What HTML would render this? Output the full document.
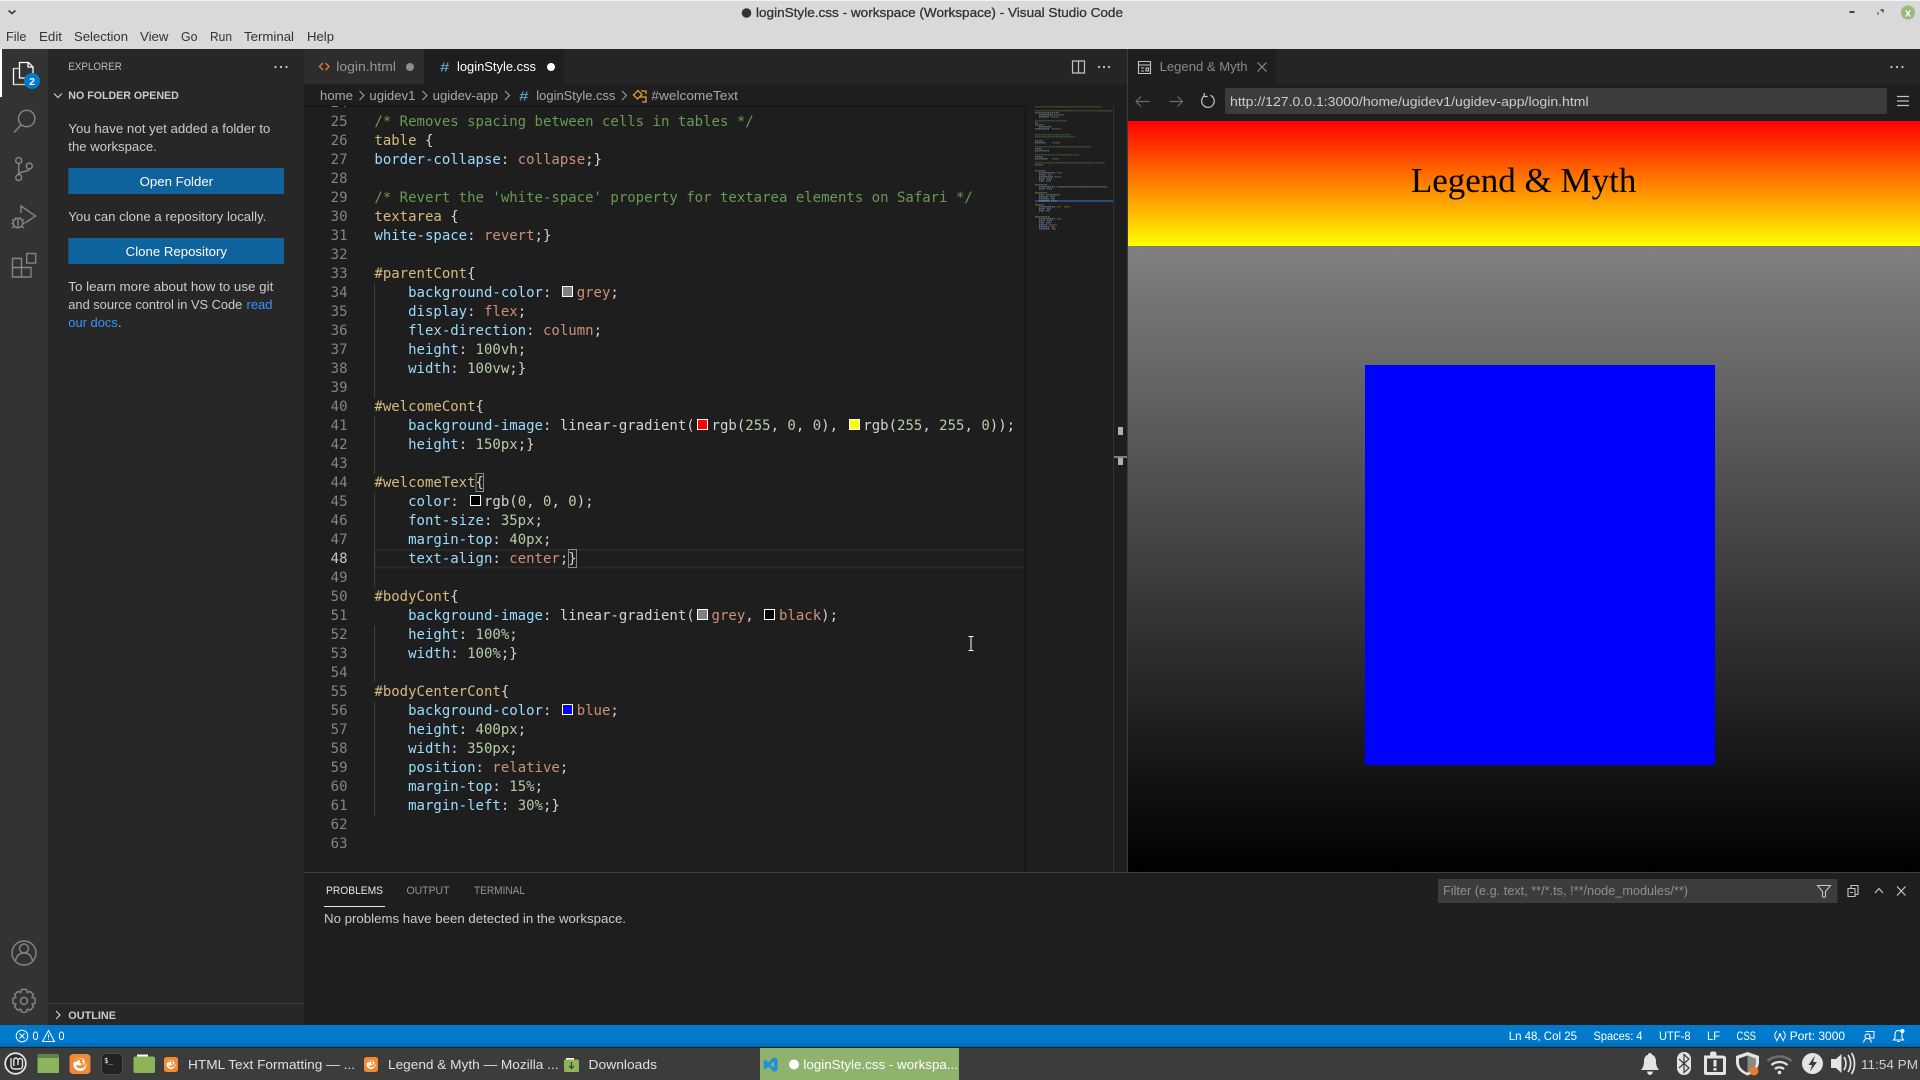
<!DOCTYPE html>
<html lang="en">
<head>
<meta charset="utf-8">
<title>loginStyle.css - workspace (Workspace) - Visual Studio Code</title>
<style>
html,body{margin:0;padding:0;background:#1e1e1e;width:1920px;height:1080px;overflow:hidden}
svg{display:block}
text{font-family:"Liberation Sans",sans-serif;font-size:13px;white-space:pre}
.m text,text.m{font-family:"DejaVu Sans Mono",monospace;font-size:14px}
.ln text{text-anchor:end;fill:#858585}
.c{fill:#6a9955}.s{fill:#d7ba7d}.p{fill:#9cdcfe}.v{fill:#ce9178}.n{fill:#b5cea8}.d{fill:#d4d4d4}
.ui{fill:#cccccc}
.ic{fill:none;stroke:#858585;stroke-width:1.4}
.w{fill:none;stroke:#c5c5c5;stroke-width:1.2}
.tr{fill:#e4e4e4}
</style>
</head>
<body>
<svg xmlns="http://www.w3.org/2000/svg" width="1920" height="1080" viewBox="0 0 1920 1080">
<defs>
<linearGradient id="hd" x1="0" y1="0" x2="0" y2="1"><stop offset="0" stop-color="#f00"/><stop offset="1" stop-color="#ff0"/></linearGradient>
<linearGradient id="bd" x1="0" y1="0" x2="0" y2="1"><stop offset="0" stop-color="#808080"/><stop offset="1" stop-color="#000"/></linearGradient>
<linearGradient id="st" x1="0" y1="0" x2="0" y2="1"><stop offset="0" stop-color="#007acc"/><stop offset=".75" stop-color="#007acc"/><stop offset="1" stop-color="#0067ab"/></linearGradient>
<clipPath id="cl"><rect x="304" y="106" width="722" height="766"/></clipPath>
</defs>

<!-- base -->
<rect width="1920" height="1080" fill="#1e1e1e"/>
<rect width="1920" height="49" fill="#d9d9d9"/>
<rect width="1920" height="1" fill="#f2f2f2"/>
<path d="M8.5 10.5l3.5 3 3.5-3" fill="none" stroke="#333" stroke-width="1.5"/>
<circle cx="746.5" cy="13" r="4.8" fill="#333"/>
<text x="756" y="17" textLength="367" lengthAdjust="spacingAndGlyphs" fill="#333" stroke="#333" stroke-width=".3">loginStyle.css - workspace (Workspace) - Visual Studio Code</text>
<path d="M1849.5 12h5" stroke="#444" stroke-width="2"/>
<path d="M1878 14.5v-2M1880.5 10h2.5v2.5" fill="none" stroke="#444" stroke-width="1.4"/>
<circle cx="1908" cy="12.5" r="7" fill="#9ab87c"/>
<text x="1905" y="16.5" font-size="11" fill="#fff" style="font-size:11px;font-weight:bold">x</text>

<g fill="#333">
<text x="6" y="41" textLength="20.5" lengthAdjust="spacingAndGlyphs">File</text>
<text x="39" y="41" textLength="23" lengthAdjust="spacingAndGlyphs">Edit</text>
<text x="74" y="41" textLength="54" lengthAdjust="spacingAndGlyphs">Selection</text>
<text x="140" y="41" textLength="28.5" lengthAdjust="spacingAndGlyphs">View</text>
<text x="181" y="41" textLength="16.5" lengthAdjust="spacingAndGlyphs">Go</text>
<text x="210" y="41" textLength="22" lengthAdjust="spacingAndGlyphs">Run</text>
<text x="244" y="41" textLength="50" lengthAdjust="spacingAndGlyphs">Terminal</text>
<text x="307" y="41" textLength="27" lengthAdjust="spacingAndGlyphs">Help</text>
</g>

<!-- activity bar -->
<rect x="0" y="49" width="48" height="976" fill="#333"/>
<rect x="0" y="49" width="2" height="48" fill="#fff"/>
<path d="M19.5 75V62.5h9l4.5 4.5V78H19.5zM28 62.5V67h5M19.5 68.5h-6V84.5H26V78" fill="none" stroke="#fff" stroke-width="1.3"/>
<path d="M13.5 68.5h6M13.5 84.5H26" stroke="#e8c88a" stroke-width="1" fill="none"/>
<circle cx="32" cy="81" r="8" fill="#007acc"/>
<text x="32" y="85" text-anchor="middle" fill="#fff" style="font-size:10.5px;font-weight:bold">2</text>
<g class="ic">
<circle cx="26.7" cy="118.500" r="8.2"/><path d="M21 125L14 132.500"/>
<circle cx="18.7" cy="160.500" r="3"/><circle cx="29.3" cy="166" r="3"/><circle cx="18.7" cy="177.500" r="3"/>
<path d="M18.7 163.500v11M29.3 169c0 3-10.600 2-10.600 6"/>
<path d="M21 213v-7l14.500 10-10.500 7"/>
<circle cx="18" cy="223" r="4.800"/><path d="M12 219.500l2.500 1.500M24 219.500l-2.500 1.500M11.500 223.500h2M24.500 223.500h-2M12 228l2.500-2M24 228l-2.500-2M15 217.500l1.500 1.500M21 217.500l-1.500 1.500M18 218.500v9"/>
<path d="M12.500 258.500h9v18.500h-9zM12.500 267.500h18.500v9.500h-9.500M21.500 258.500v18.500"/>
<rect x="26.700" y="253.500" width="9" height="9.500"/>
<circle cx="24" cy="953" r="12"/><circle cx="24" cy="948.500" r="4.500"/><path d="M15.500 961c1-6 4-8 8.500-8s7.500 2 8.500 8"/>
<circle cx="24" cy="1001" r="3.500"/>
<path d="M21.500 989.500h5l.8 3 2.800-1.200 3.300 3.400-1.300 2.800 3 .8v5l-3 .8 1.300 2.800-3.300 3.400-2.800-1.200-.8 3h-5l-.8-3-2.800 1.200-3.300-3.400 1.300-2.800-3-.8v-5l3-.8-1.300-2.800 3.300-3.400 2.800 1.200z"/>
</g>

<!-- sidebar -->
<rect x="48" y="49" width="256" height="976" fill="#272727"/>
<text x="68.300" y="70" fill="#bbb" textLength="53.500" lengthAdjust="spacingAndGlyphs" style="font-size:11px">EXPLORER</text>
<g fill="#ccc"><circle cx="275.500" cy="67" r="1.100"/><circle cx="281" cy="67" r="1.100"/><circle cx="286.500" cy="67" r="1.100"/></g>
<path d="M54 93.500l4 4 4-4" fill="none" stroke="#ccc" stroke-width="1.200"/>
<text x="68.300" y="99" fill="#ccc" textLength="110.500" lengthAdjust="spacingAndGlyphs" style="font-size:11px;font-weight:bold">NO FOLDER OPENED</text>
<g class="ui">
<text x="68.300" y="133" textLength="202" lengthAdjust="spacingAndGlyphs">You have not yet added a folder to</text>
<text x="68.300" y="151" textLength="88.500" lengthAdjust="spacingAndGlyphs">the workspace.</text>
<text x="68.300" y="221" textLength="198" lengthAdjust="spacingAndGlyphs">You can clone a repository locally.</text>
<text x="68.300" y="291" textLength="205" lengthAdjust="spacingAndGlyphs">To learn more about how to use git</text>
<text x="68.300" y="309" textLength="174" lengthAdjust="spacingAndGlyphs">and source control in VS Code</text>
<text x="118" y="327">.</text>
</g>
<text x="246.500" y="309" fill="#3794ff" textLength="26" lengthAdjust="spacingAndGlyphs">read</text>
<text x="68.300" y="327" fill="#3794ff" textLength="49.500" lengthAdjust="spacingAndGlyphs">our docs</text>
<rect x="68.300" y="168" width="215.700" height="26" fill="#0e639c"/>
<rect x="68.300" y="238" width="215.700" height="26" fill="#0e639c"/>
<text x="139.600" y="186" fill="#fff" textLength="73.500" lengthAdjust="spacingAndGlyphs">Open Folder</text>
<text x="125.700" y="256" fill="#fff" textLength="101.300" lengthAdjust="spacingAndGlyphs">Clone Repository</text>
<rect x="48" y="1003" width="256" height="1" fill="#3c3c3c"/>
<path d="M56 1011l4 4-4 4" fill="none" stroke="#ccc" stroke-width="1.200"/>
<text x="68.300" y="1019" fill="#ccc" textLength="47.700" lengthAdjust="spacingAndGlyphs" style="font-size:11px;font-weight:bold">OUTLINE</text>

<!-- tabs -->
<rect x="304" y="49" width="824" height="35" fill="#252526"/>
<rect x="304" y="49" width="120" height="35" fill="#2d2d2d"/>
<rect x="424" y="49" width="140" height="35" fill="#1e1e1e"/>
<path d="M323 63l-3.500 3.500 3.500 3.500M325.500 63l3.500 3.500-3.500 3.500" fill="none" stroke="#e37933" stroke-width="1.400"/>
<text x="336.300" y="71" fill="#969696" textLength="59.700" lengthAdjust="spacingAndGlyphs">login.html</text>
<circle cx="410" cy="67" r="4" fill="#8e8e8e"/>
<text x="440" y="71.500" fill="#519aba" style="font-size:13px;font-weight:bold" textLength="9.500" lengthAdjust="spacingAndGlyphs">#</text>
<text x="457" y="71" fill="#fff" textLength="79" lengthAdjust="spacingAndGlyphs">loginStyle.css</text>
<circle cx="551" cy="67" r="4" fill="#fff"/>
<path d="M1072.500 61h12v12h-12zM1078.500 61v12" fill="none" stroke="#c5c5c5" stroke-width="1.200"/>
<g fill="#c5c5c5"><circle cx="1099" cy="67" r="1.100"/><circle cx="1104" cy="67" r="1.100"/><circle cx="1109" cy="67" r="1.100"/></g>

<!-- breadcrumbs -->
<rect x="304" y="84" width="823" height="22" fill="#1e1e1e"/>
<g fill="#a8a8a8">
<text x="320" y="100" textLength="33" lengthAdjust="spacingAndGlyphs">home</text>
<text x="369.400" y="100" textLength="46" lengthAdjust="spacingAndGlyphs">ugidev1</text>
<text x="432.600" y="100" textLength="65.400" lengthAdjust="spacingAndGlyphs">ugidev-app</text>
<text x="536.300" y="100" textLength="79.200" lengthAdjust="spacingAndGlyphs">loginStyle.css</text>
<text x="651.400" y="100" textLength="86.600" lengthAdjust="spacingAndGlyphs">#welcomeText</text>
</g>
<text x="519" y="100.500" fill="#519aba" style="font-size:13px;font-weight:bold" textLength="9.500" lengthAdjust="spacingAndGlyphs">#</text>
<path d="M359.500 91l4.500 4.500-4.500 4.500M422.500 91l4.500 4.500-4.500 4.500M505 91l4.500 4.500-4.500 4.500M622 91l4.500 4.500-4.500 4.500" fill="none" stroke="#a8a8a8" stroke-width="1"/>
<path d="M633.500 95l4.500-4.500 4 4-4.500 4.500zM640 97h6v5h-4M641 91h5v3" fill="none" stroke="#ee9d28" stroke-width="1.300"/>
<rect x="304" y="105" width="720" height="2" fill="#171717"/>

<!-- editor -->
<g clip-path="url(#cl)">
<rect x="375" y="550" width="651" height="17.500" fill="none" stroke="#282828" stroke-width="2"/>
<path d="M374.500 283.500v114M374.500 416.500v57M374.500 492.500v95M374.500 625.500v57M374.500 701.500v114" stroke="#404040" stroke-width="1" fill="none"/>
<g class="m ln">
<text x="347.500" y="107">24</text><text x="347.500" y="126">25</text><text x="347.500" y="145">26</text><text x="347.500" y="164">27</text><text x="347.500" y="183">28</text><text x="347.500" y="202">29</text><text x="347.500" y="221">30</text><text x="347.500" y="240">31</text><text x="347.500" y="259">32</text><text x="347.500" y="278">33</text><text x="347.500" y="297">34</text><text x="347.500" y="316">35</text><text x="347.500" y="335">36</text><text x="347.500" y="354">37</text><text x="347.500" y="373">38</text><text x="347.500" y="392">39</text><text x="347.500" y="411">40</text><text x="347.500" y="430">41</text><text x="347.500" y="449">42</text><text x="347.500" y="468">43</text><text x="347.500" y="487">44</text><text x="347.500" y="506">45</text><text x="347.500" y="525">46</text><text x="347.500" y="544">47</text><text x="347.500" y="563" style="fill:#c6c6c6">48</text><text x="347.500" y="582">49</text><text x="347.500" y="601">50</text><text x="347.500" y="620">51</text><text x="347.500" y="639">52</text><text x="347.500" y="658">53</text><text x="347.500" y="677">54</text><text x="347.500" y="696">55</text><text x="347.500" y="715">56</text><text x="347.500" y="734">57</text><text x="347.500" y="753">58</text><text x="347.500" y="772">59</text><text x="347.500" y="791">60</text><text x="347.500" y="810">61</text><text x="347.500" y="829">62</text><text x="347.500" y="848">63</text>
</g>
<g class="m d">
<text x="374.400" y="126" class="c">/* Removes spacing between cells in tables */</text>
<text x="374.400" y="145"><tspan class="s">table</tspan> {</text>
<text x="374.400" y="164"><tspan class="p">border-collapse</tspan>: <tspan class="v">collapse</tspan>;}</text>
<text x="374.400" y="202" class="c">/* Revert the 'white-space' property for textarea elements on Safari */</text>
<text x="374.400" y="221"><tspan class="s">textarea</tspan> {</text>
<text x="374.400" y="240"><tspan class="p">white-space</tspan>: <tspan class="v">revert</tspan>;}</text>
<text x="374.400" y="278"><tspan class="s">#parentCont</tspan>{</text>
<text x="374.400" y="297">    <tspan class="p">background-color</tspan>:   <tspan class="v">grey</tspan>;</text>
<text x="374.400" y="316">    <tspan class="p">display</tspan>: <tspan class="v">flex</tspan>;</text>
<text x="374.400" y="335">    <tspan class="p">flex-direction</tspan>: <tspan class="v">column</tspan>;</text>
<text x="374.400" y="354">    <tspan class="p">height</tspan>: <tspan class="n">100vh</tspan>;</text>
<text x="374.400" y="373">    <tspan class="p">width</tspan>: <tspan class="n">100vw</tspan>;}</text>
<text x="374.400" y="411"><tspan class="s">#welcomeCont</tspan>{</text>
<text x="374.400" y="430">    <tspan class="p">background-image</tspan>: linear-gradient(  rgb(<tspan class="n">255</tspan>, <tspan class="n">0</tspan>, <tspan class="n">0</tspan>),   rgb(<tspan class="n">255</tspan>, <tspan class="n">255</tspan>, <tspan class="n">0</tspan>));</text>
<text x="374.400" y="449">    <tspan class="p">height</tspan>: <tspan class="n">150px</tspan>;}</text>
<text x="374.400" y="487"><tspan class="s">#welcomeText</tspan>{</text>
<text x="374.400" y="506">    <tspan class="p">color</tspan>:   rgb(<tspan class="n">0</tspan>, <tspan class="n">0</tspan>, <tspan class="n">0</tspan>);</text>
<text x="374.400" y="525">    <tspan class="p">font-size</tspan>: <tspan class="n">35px</tspan>;</text>
<text x="374.400" y="544">    <tspan class="p">margin-top</tspan>: <tspan class="n">40px</tspan>;</text>
<text x="374.400" y="563">    <tspan class="p">text-align</tspan>: <tspan class="v">center</tspan>;}</text>
<text x="374.400" y="601"><tspan class="s">#bodyCont</tspan>{</text>
<text x="374.400" y="620">    <tspan class="p">background-image</tspan>: linear-gradient(  <tspan class="v">grey</tspan>,   <tspan class="v">black</tspan>);</text>
<text x="374.400" y="639">    <tspan class="p">height</tspan>: <tspan class="n">100%</tspan>;</text>
<text x="374.400" y="658">    <tspan class="p">width</tspan>: <tspan class="n">100%</tspan>;}</text>
<text x="374.400" y="696"><tspan class="s">#bodyCenterCont</tspan>{</text>
<text x="374.400" y="715">    <tspan class="p">background-color</tspan>:   <tspan class="v">blue</tspan>;</text>
<text x="374.400" y="734">    <tspan class="p">height</tspan>: <tspan class="n">400px</tspan>;</text>
<text x="374.400" y="753">    <tspan class="p">width</tspan>: <tspan class="n">350px</tspan>;</text>
<text x="374.400" y="772">    <tspan class="p">position</tspan>: <tspan class="v">relative</tspan>;</text>
<text x="374.400" y="791">    <tspan class="p">margin-top</tspan>: <tspan class="n">15%</tspan>;</text>
<text x="374.400" y="810">    <tspan class="p">margin-left</tspan>: <tspan class="n">30%</tspan>;}</text>
</g>
<!-- swatches -->
<g stroke="#fff" stroke-width="1">
<rect x="562.500" y="286.500" width="10" height="10" fill="#808080"/>
<rect x="697.500" y="419.500" width="10" height="10" fill="#f00"/>
<rect x="849.500" y="419.500" width="10" height="10" fill="#ff0"/>
<rect x="470.500" y="495.500" width="10" height="10" fill="#000"/>
<rect x="697.500" y="609.500" width="10" height="10" fill="#808080"/>
<rect x="764.500" y="609.500" width="10" height="10" fill="#000"/>
<rect x="562.500" y="704.500" width="10" height="10" fill="#00f"/>
</g>
<!-- bracket match -->
<rect x="476" y="473.500" width="7.500" height="18" fill="none" stroke="#888" stroke-width="1"/>
<rect x="568.500" y="549.500" width="8" height="18" fill="none" stroke="#888" stroke-width="1"/>
</g>
<!-- I-beam -->
<path d="M968.500 636.500h2l.500.500.500-.500h2M971 637v13M968.500 650.500h2l.500-.500.500.500h2" fill="none" stroke="#fff" stroke-width="1"/>

<!-- minimap -->
<rect x="1024" y="106" width="3" height="766" fill="#181818"/>
<rect x="1035" y="200" width="78" height="2" fill="#264f78"/>
<g fill="none" stroke-width="1.100" opacity=".55" stroke-dasharray="1.500 .6">
<path stroke="#6a9955" d="M1035 106.800h67M1035 110.800h77M1035 120.800h32M1035 134.800h36M1035 136.800h40M1035 146.800h56M1035 154.800h44M1035 162.800h70"/>
<path stroke="#d7ba7d" d="M1035 112.800h24M1035 122.800h3M1035 124.800h9M1035 140.800h8M1035 148.800h7M1035 156.800h8M1035 164.800h8M1035 170.800h11M1035 184.800h12M1035 192.800h12M1035 204.800h9M1035 216.800h15"/>
<path stroke="#9cdcfe" d="M1039 114.800h14M1039 116.800h10M1039 126.800h12M1035 128.800h14M1035 142.800h11M1035 150.800h14M1035 158.800h13M1039 172.800h16M1039 174.800h7M1039 176.800h14M1039 178.800h6M1039 180.800h5M1039 186.800h16M1039 188.800h6M1039 194.800h5M1039 196.800h9M1039 198.800h10M1039 200.800h10M1039 206.800h16M1039 208.800h6M1039 210.800h5M1039 218.800h16M1039 220.800h6M1039 222.800h5M1039 224.800h8M1039 226.800h10M1039 228.800h11"/>
<path stroke="#ce9178" d="M1054 114.800h10M1051 116.800h8M1052 128.800h9M1052 142.800h8M1052 158.800h7M1057 172.800h5M1048 174.800h4M1055 176.800h6M1051 200.800h6M1057 206.800h4M1064 206.800h6M1057 218.800h4M1049 224.800h8"/>
<path stroke="#b5cea8" d="M1047 178.800h5M1046 180.800h5M1057 186.800h50M1047 188.800h5M1046 194.800h14M1050 196.800h5M1051 198.800h4M1047 208.800h4M1046 210.800h4M1047 220.800h5M1046 222.800h5M1051 226.800h4M1052 228.800h4"/>
</g>
<!-- scrollbar lane -->
<rect x="1113" y="106" width="14" height="766" fill="#1e1e1e"/>
<rect x="1113" y="106" width="1" height="766" fill="#333"/>
<rect x="1114" y="456" width="13" height="2" fill="#7f7f7f"/>
<rect x="1118" y="427" width="5" height="8" fill="#b0b0b0"/>
<rect x="1118" y="458" width="5" height="7" fill="#b0b0b0"/>
<rect x="1127" y="49" width="1" height="823" fill="#3c3c3c"/>

<!-- right pane -->
<rect x="1128" y="49" width="792" height="35" fill="#252526"/>
<rect x="1128" y="49" width="148" height="35" fill="#1e1e1e"/>
<path d="M1138.500 61.500h12v12h-12zM1138.500 65h12M1141 68h3M1141 71h3M1146 68h2.500v3h-2.500z" fill="none" stroke="#c5c5c5" stroke-width="1.100"/>
<text x="1159.600" y="71" fill="#8a8a8a" textLength="88" lengthAdjust="spacingAndGlyphs">Legend &amp; Myth</text>
<path d="M1257.500 62.500l9 9M1266.500 62.500l-9 9" stroke="#8a8a8a" stroke-width="1.200"/>
<g fill="#c5c5c5"><circle cx="1891.500" cy="67" r="1.100"/><circle cx="1897" cy="67" r="1.100"/><circle cx="1902.500" cy="67" r="1.100"/></g>
<rect x="1128" y="84" width="792" height="37" fill="#1e1e1e"/>
<path d="M1149.500 101.500h-13M1141 96.500l-5 5 5 5" fill="none" stroke="#6c6c6c" stroke-width="1.200"/>
<path d="M1169.500 101.500h13M1177.500 96.500l5 5-5 5" fill="none" stroke="#6c6c6c" stroke-width="1.200"/>
<path d="M1204.500 95.800a6.300 6.300 0 1 0 6-.5M1204.200 93v3.500h3.500" fill="none" stroke="#c5c5c5" stroke-width="1.200"/>
<rect x="1225" y="88" width="662" height="26" fill="#3c3c3c"/>
<text x="1230" y="106" fill="#ccc" textLength="358.600" lengthAdjust="spacingAndGlyphs">http://127.0.0.1:3000/home/ugidev1/ugidev-app/login.html</text>
<path d="M1897 96.500h12M1897 101h12M1897 105.500h12" stroke="#c5c5c5" stroke-width="1.200"/>

<rect x="1128" y="121" width="792" height="125" fill="url(#hd)"/>
<rect x="1128" y="246" width="792" height="626" fill="url(#bd)"/>
<text x="1523.600" y="192" text-anchor="middle" fill="#000" style="font-family:'Liberation Serif',serif;font-size:35px">Legend &amp; Myth</text>
<rect x="1365" y="365" width="350" height="400" fill="#00f"/>

<!-- panel -->
<rect x="304" y="872" width="1616" height="1" fill="#414141"/>
<rect x="304" y="873" width="1616" height="152" fill="#1e1e1e"/>
<text x="326" y="894" fill="#e7e7e7" textLength="57" lengthAdjust="spacingAndGlyphs" style="font-size:11px">PROBLEMS</text>
<text x="406.500" y="894" fill="#969696" textLength="43" lengthAdjust="spacingAndGlyphs" style="font-size:11px">OUTPUT</text>
<text x="474" y="894" fill="#969696" textLength="51" lengthAdjust="spacingAndGlyphs" style="font-size:11px">TERMINAL</text>
<rect x="324" y="906" width="61" height="1" fill="#e7e7e7"/>
<text x="324" y="923" fill="#ccc" textLength="302" lengthAdjust="spacingAndGlyphs">No problems have been detected in the workspace.</text>
<rect x="1438" y="879" width="399.500" height="24" fill="#3c3c3c"/>
<text x="1443" y="895" fill="#8f8f8f" textLength="245" lengthAdjust="spacingAndGlyphs">Filter (e.g. text, **/*.ts, !**/node_modules/**)</text>
<path d="M1817.500 885.500h13l-5 6v5.500h-3v-5.500z" fill="none" stroke="#c5c5c5" stroke-width="1.100"/>
<path d="M1851 888v-2.500h7v9h-2.500M1848 888.500h7v8h-7zM1850 892.500h3" fill="none" stroke="#c5c5c5" stroke-width="1.100"/>
<path d="M1875 893l4-4.500 4 4.500M1897 886.500l8.500 9M1905.500 886.500l-8.500 9" fill="none" stroke="#c5c5c5" stroke-width="1.200"/>

<!-- status bar -->
<rect x="0" y="1025" width="1920" height="22" fill="url(#st)"/>
<g fill="#fff">
<circle cx="22" cy="1036" r="5.800" fill="none" stroke="#fff"/>
<path d="M19.500 1033.500l5 5M24.500 1033.500l-5 5" stroke="#fff" fill="none"/>
<text x="32.500" y="1040" textLength="6" lengthAdjust="spacingAndGlyphs" style="font-size:12px">0</text>
<path d="M48.500 1030.500l6 11h-12zM48.500 1034.500v3.500M48.500 1039v1" fill="none" stroke="#fff"/>
<text x="58.500" y="1040" textLength="6" lengthAdjust="spacingAndGlyphs" style="font-size:12px">0</text>
<text x="1508.700" y="1040" textLength="68.300" lengthAdjust="spacingAndGlyphs" style="font-size:12px">Ln 48, Col 25</text>
<text x="1593.500" y="1040" textLength="49" lengthAdjust="spacingAndGlyphs" style="font-size:12px">Spaces: 4</text>
<text x="1659" y="1040" textLength="31.500" lengthAdjust="spacingAndGlyphs" style="font-size:12px">UTF-8</text>
<text x="1707" y="1040" textLength="13" lengthAdjust="spacingAndGlyphs" style="font-size:12px">LF</text>
<text x="1736.500" y="1040" textLength="19.500" lengthAdjust="spacingAndGlyphs" style="font-size:12px">CSS</text>
<text x="1789.800" y="1040" textLength="55.200" lengthAdjust="spacingAndGlyphs" style="font-size:12px">Port: 3000</text>
<path d="M1780 1034.500l-3.500 7M1780 1034.500l3.500 7M1777 1031c-3 3-3 6 0 9M1783 1031c3 3 3 6 0 9" fill="none" stroke="#fff" stroke-width=".9"/>
<circle cx="1780" cy="1034.500" r="1.300"/>
<path d="M1865.500 1031.500h8.500v6.500h-4M1867.500 1034c1.700 0 2.500 1 2.500 2.300s-1 2.300-2.500 2.300-2.500-1-2.500-2.300 1-2.300 2.500-2.300zM1863.500 1042.500c.5-2.500 2-4 4-4s3.500 1.500 4 4" fill="none" stroke="#fff" stroke-width="1"/>
<path d="M1898.500 1030.500c2.700 0 3.500 2 3.500 4v3.500l1.500 2h-10l1.500-2v-3.500c0-2 1-4 3.500-4zM1897 1041.500h3" fill="none" stroke="#fff" stroke-width="1.100"/>
<circle cx="1902.500" cy="1031" r="2"/>
</g>

<!-- taskbar -->
<rect x="0" y="1047" width="1920" height="33" fill="#3c3c3c"/>
<rect x="0" y="1047" width="1920" height="1" fill="#16232d"/>
<rect x="760" y="1048" width="199" height="32" fill="#8fb26c"/>

<!-- mint logo -->
<circle cx="15.500" cy="1063.500" r="10.300" fill="#2c2c2c" stroke="#e2e2e2" stroke-width="1.800"/>
<path d="M11 1058v7.500c0 2 1 3.500 3.500 3.500h5c2 0 3-1.500 3-3v-5c0-1.500-1-2.500-2.300-2.500s-2.200 1-2.200 2.500v4M18 1060.500c0-1.500-1-2.500-2.200-2.500s-2 1-2 2.500v5.500" fill="none" stroke="#e2e2e2" stroke-width="1.400"/>
<!-- files -->
<rect x="37.500" y="1054" width="21.500" height="19" rx="1" fill="#8db35b"/>
<rect x="37.500" y="1054" width="21.500" height="4" fill="#66804a"/>
<!-- firefox -->
<rect x="69.500" y="1054" width="21" height="20" rx="4" fill="#f08a35"/>
<circle cx="80" cy="1064.500" r="6.500" fill="#fff"/>
<path d="M75 1062c2-3 5-3.500 7-2-1 .5-1.500 1-1.500 2 2 .5 2.500 2 1.500 3.500-1.500 1.500-4 1-5.500 0 2 2.500 5.500 2.500 7.500.5 2-2.500 2-5 1-7.500" fill="none" stroke="#f08a35" stroke-width="1.700"/>
<!-- terminal -->
<rect x="101.500" y="1053.500" width="21" height="21" rx="4" fill="#222" stroke="#555" stroke-width=".8"/>
<text x="104" y="1063" fill="#eee" style="font-family:'DejaVu Sans Mono',monospace;font-size:7.500px">$_</text>
<!-- folder -->
<path d="M137 1054.500h11v3h-11z" fill="#fff"/>
<rect x="133.500" y="1056.500" width="21.500" height="16.500" rx="2" fill="#8db35b"/>
<!-- small firefox 1 -->
<rect x="164" y="1057" width="14" height="15" rx="2.500" fill="#f08a35"/>
<circle cx="171" cy="1064.500" r="4.500" fill="#fff"/>
<path d="M167.500 1063c1-2 3.500-2.500 5-1.500-1 .5-1 1-1 1.500 1.500.5 1.500 1.500 1 2.500-1 1-2.800.8-3.800 0 1.300 1.500 3.800 1.500 5 .3 1.300-1.500 1.300-3.300.8-5" fill="none" stroke="#f08a35" stroke-width="1.100"/>
<text x="188" y="1069" fill="#e0e0e0" textLength="167" lengthAdjust="spacingAndGlyphs">HTML Text Formatting — ...</text>
<rect x="364" y="1057" width="14" height="15" rx="2.500" fill="#f08a35"/>
<circle cx="371" cy="1064.500" r="4.500" fill="#fff"/>
<path d="M367.500 1063c1-2 3.500-2.500 5-1.500-1 .5-1 1-1 1.500 1.500.5 1.500 1.500 1 2.500-1 1-2.800.8-3.800 0 1.300 1.500 3.800 1.500 5 .3 1.300-1.500 1.300-3.300.8-5" fill="none" stroke="#f08a35" stroke-width="1.100"/>
<text x="388" y="1069" fill="#e0e0e0" textLength="170.500" lengthAdjust="spacingAndGlyphs">Legend &amp; Myth — Mozilla ...</text>
<path d="M566 1058h8v2h-8z" fill="#fff"/>
<rect x="564" y="1059.500" width="15" height="12.500" rx="1.500" fill="#8db35b"/>
<path d="M571.500 1062v6M569 1066l2.500 2.500 2.500-2.500" fill="none" stroke="#3c3c3c" stroke-width="1.200"/>
<text x="588.500" y="1069" fill="#e0e0e0" textLength="68.500" lengthAdjust="spacingAndGlyphs">Downloads</text>
<!-- vscode icon -->
<path d="M774 1057l3.500 1.800v11.400l-3.500 1.800-5.500-5.300-3.200 2.500-1.500-.8v-7.800l1.500-.8 3.200 2.500zM774 1061l-3.500 3.500 3.500 3.500z" fill="#1f8fe0" fill-rule="evenodd"/>
<circle cx="794" cy="1064.500" r="5" fill="#fff"/>
<text x="803.400" y="1069" fill="#fff" textLength="154.600" lengthAdjust="spacingAndGlyphs">loginStyle.css - workspa...</text>

<!-- tray -->
<g class="tr">
<path transform="translate(-1 0)" d="M1651 1053c1.200 0 2 .8 2 1.800 3 1 4 3.700 4 6.500 0 4 1 6.700 3 8.700h-18c2-2 3-4.700 3-8.700 0-2.800 1-5.500 4-6.500 0-1 .8-1.800 2-1.800zM1648 1071.500h6c-.5 2.200-1.500 3.500-3 3.500s-2.500-1.300-3-3.500z"/>
<rect x="1677" y="1052" width="14" height="23" rx="7"/>
<path d="M1704 1055.500h6v-1.500c0-1.500 1-2.500 2.500-2.500h1.500c1.500 0 2.500 1 2.500 2.500v1.500h4c2.500 0 5.500 0 5.500 2.500v15c0 1.500-1 2-2.500 2h-17c-1.500 0-2.500-.5-2.500-2v-15.500zM1707 1058.500v13.500h16v-13.500z" fill-rule="evenodd"/>
<rect x="1713.500" y="1060" width="3" height="6.500"/><rect x="1713.500" y="1068" width="3" height="2.500"/>
<path d="M1747.500 1052l11.500 4v6c0 6.500-5 11-11.500 13.500-6.500-2.500-11.500-7-11.500-13.500v-6zM1747.500 1055.500l-8.500 3v4c0 4.500 3.500 8 8.500 10.300z" fill-rule="evenodd"/>
<path d="M1747.500 1055.500l8.500 3v4c0 4.500-3.500 8-8.500 10.300z" fill="#8a8a8a"/>
<circle cx="1812.500" cy="1063.500" r="10.500"/>
<path d="M1815 1055.500l-6.500 9.500h3.500l-2 6.500 7-9.500h-3.800z" fill="#3c3c3c"/>
<path d="M1831 1059h5l5.500-5v19l-5.500-5h-5z"/>
</g>
<circle cx="1754" cy="1071" r="4.500" fill="#ee7a2e"/>
<path d="M1767.500 1061c7-6 17-6 24 0" fill="none" stroke="#6e6e6e" stroke-width="2.500"/>
<path d="M1771.500 1065c4.500-4 11.500-4 16 0M1775 1069c2.500-2.200 6.500-2.200 9 0" fill="none" stroke="#e4e4e4" stroke-width="2.200"/>
<circle cx="1779.500" cy="1072.500" r="1.800" fill="#e4e4e4"/>
<path d="M1844 1057c2.500 4 2.500 9 0 13M1848 1055c3.500 5 3.500 12 0 17M1851.500 1053c4 6 4 15 0 21" fill="none" stroke="#e4e4e4" stroke-width="1.700"/>
<text x="1861" y="1069" fill="#d0d0d0" textLength="57" lengthAdjust="spacingAndGlyphs">11:54 PM</text>
<path d="M1679 1059l10 9-5 4.500v-18l5 4.500-10 9" fill="none" stroke="#3c3c3c" stroke-width="1.200"/>
</svg>
</body>
</html>
